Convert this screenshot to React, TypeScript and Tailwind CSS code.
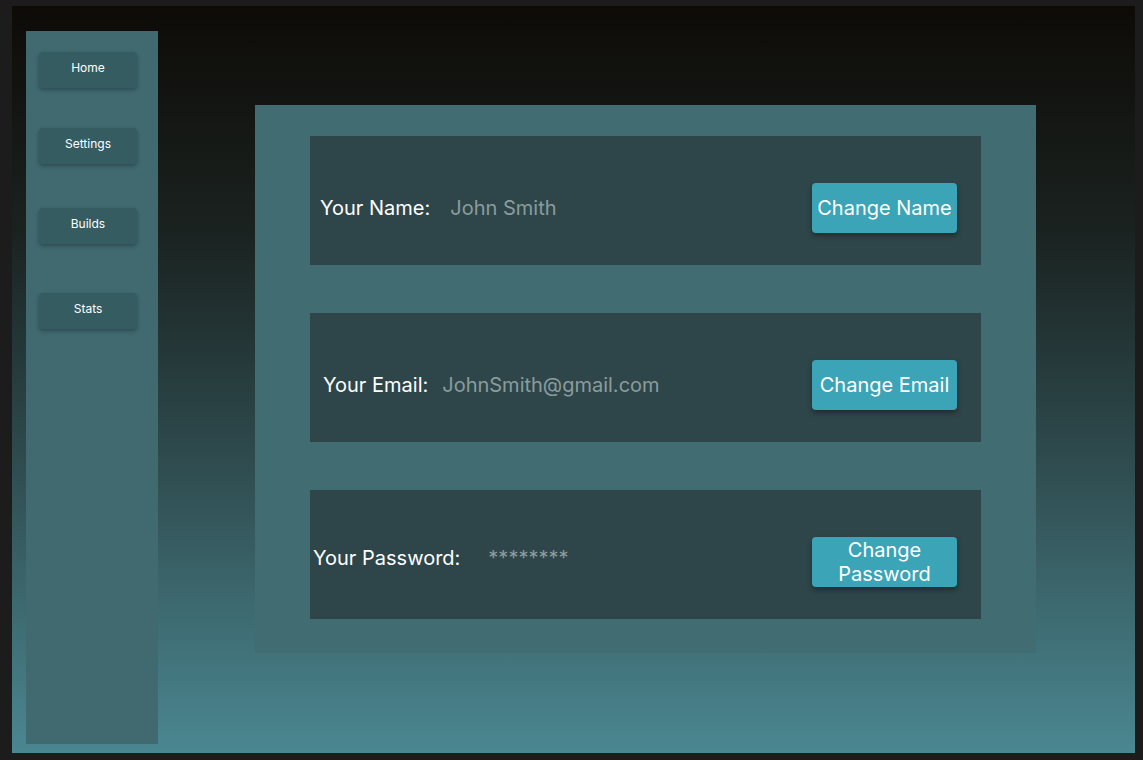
export default function App() {
  const navItems = [
    { label: "Home", mt: "mt-[21px]" },
    { label: "Settings", mt: "mt-[40px]" },
    { label: "Builds", mt: "mt-[44px]" },
    { label: "Stats", mt: "mt-[49px]" },
  ];

  const rows = [
    { label: "Your Name:", value: "John Smith", labelPl: "pl-[10px]", valueMl: "ml-[20px]", textShift: "", button: "Change Name" },
    { label: "Your Email:", value: "JohnSmith@gmail.com", labelPl: "pl-[13px]", valueMl: "ml-[14px]", textShift: "", button: "Change Email" },
    { label: "Your Password:", value: "********", labelPl: "pl-[3px]", valueMl: "ml-[28px]", textShift: "mb-[8px]", button: "Change Password" },
  ];

  return (
    <div
      className="w-[1143px] h-[760px] bg-[#1c1c1c] pt-[6px] pl-[12px]"
      style={{ fontFamily: "Inter, 'Noto Sans', sans-serif" }}
    >
      <div className="w-[1123px] h-[747px] flex bg-[linear-gradient(180deg,#0e0b07_0%,#1a2220_30%,#2e4a4d_60%,#4b8791_100%)]">
        {/* Sidebar */}
        <div className="ml-[14px] mt-[25px] w-[132px] h-[713px] bg-[#406a70] flex flex-col items-start pl-[13px]">
          {navItems.map((item) => (
            <button
              key={item.label}
              className={`${item.mt} w-[98px] h-[36px] rounded-[4px] bg-[#355c61] text-white text-[12px] shadow-[0_2px_4px_rgba(0,0,0,0.3)] flex items-center justify-center pb-[4px]`}
            >
              {item.label}
            </button>
          ))}
        </div>

        {/* Main panel */}
        <div className="ml-[97px] mt-[99px] w-[781px] h-[548px] bg-[#416c71] pt-[31px] pl-[55px] flex flex-col gap-[48px]">
          {rows.map((row) => (
            <div
              key={row.label}
              className="w-[671px] h-[129px] bg-[#2e4649] flex items-center pt-[14px]"
            >
              <span className={`${row.labelPl} ${row.textShift} text-white text-[20px]`}>{row.label}</span>
              <span className={`${row.valueMl} ${row.textShift} text-[#8a9c9d] text-[20px]`}>{row.value}</span>
              <button className="ml-auto mr-[24px] w-[145px] h-[50px] rounded-[4px] bg-[#3ba4b6] text-white text-[20px] leading-[24px] shadow-[0_3px_5px_rgba(0,0,0,0.35)] px-[4px]">
                {row.button}
              </button>
            </div>
          ))}
        </div>
      </div>
    </div>
  );
}
